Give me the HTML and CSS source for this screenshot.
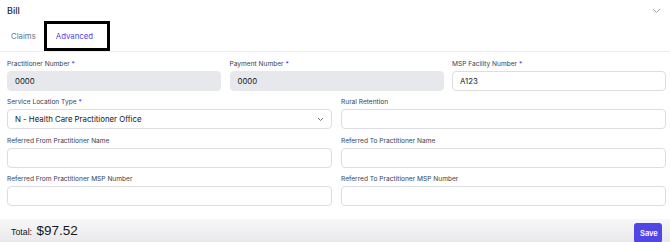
FILE: index.html
```html
<!DOCTYPE html>
<html lang="en">
<head>
  <meta charset="UTF-8">
  <meta name="viewport" content="width=device-width, initial-scale=1.0">
  <title>Bill</title>
  <link rel="stylesheet" href="styles.css">
</head>
<body>

  <div class="panel-header">
    <span class="panel-title">Bill</span>
    <svg class="header-chevron" width="9" height="6" viewBox="0 0 9 6"><path d="M1 1l3.5 3.5L8 1" fill="none" stroke="#9ca3af" stroke-width="1"/></svg>
  </div>

  <div class="tabs">
    <button class="tab">Claims</button>
    <button class="tab tab-active">Advanced</button>
  </div>

  <div class="form">
    <div class="row row-3">
      <div class="field">
        <label>Practitioner Number <span class="req">*</span></label>
        <div class="input input-disabled">0000</div>
      </div>
      <div class="field">
        <label>Payment Number <span class="req">*</span></label>
        <div class="input input-disabled">0000</div>
      </div>
      <div class="field">
        <label>MSP Facility Number <span class="req">*</span></label>
        <div class="input">A123</div>
      </div>
    </div>

    <div class="row row-2">
      <div class="field">
        <label>Service Location Type <span class="req">*</span></label>
        <div class="input select">
          <span>N - Health Care Practitioner Office</span>
          <svg width="7" height="5" viewBox="0 0 7 5"><path d="M1 1l2.5 2.5L6 1" fill="none" stroke="#6b7280" stroke-width="1"/></svg>
        </div>
      </div>
      <div class="field">
        <label>Rural Retention</label>
        <div class="input"></div>
      </div>
    </div>

    <div class="row row-2">
      <div class="field">
        <label>Referred From Practitioner Name</label>
        <div class="input"></div>
      </div>
      <div class="field">
        <label>Referred To Practitioner Name</label>
        <div class="input"></div>
      </div>
    </div>

    <div class="row row-2">
      <div class="field">
        <label>Referred From Practitioner MSP Number</label>
        <div class="input"></div>
      </div>
      <div class="field">
        <label>Referred To Practitioner MSP Number</label>
        <div class="input"></div>
      </div>
    </div>
  </div>

  <div class="footer">
    <div class="total"><span class="total-label">Total:</span> <span class="total-amount">$97.52</span></div>
    <button class="save-btn">Save</button>
  </div>

</body>
</html>
```

FILE: styles.css
```css
body {
  margin: 0;
  width: 670px;
  height: 242px;
  overflow: hidden;
  font-family: Inter, 'Liberation Sans', sans-serif;
  color: #111827;
  background: #ffffff;
}

.panel-header {
  height: 21px;
  display: flex;
  align-items: center;
  justify-content: space-between;
  padding: 0 9px 0 7px;
}

.panel-title {
  font-size: 9px;
  font-weight: 500;
  color: #1f2937;
}

.tabs {
  height: 30px;
  display: flex;
  align-items: stretch;
  border-bottom: 1px solid #ececef;
}

.tab {
  background: none;
  border: 3px solid transparent;
  font-family: inherit;
  font-size: 7.8px;
  color: #6b7280;
  padding: 0 5px 0 8px;
  cursor: pointer;
}

.tab-active {
  border-color: #000;
  color: #4f46e5;
  padding: 0 9px;
  width: 66px;
  text-align: left;
}

.form {
  padding: 7px 4px 0 7px;
  display: flex;
  flex-direction: column;
  gap: 6.4px;
}

.row {
  display: grid;
}

.row-3 {
  grid-template-columns: 1fr 1fr 1fr;
  gap: 8.5px;
}

.row-2 {
  grid-template-columns: 1fr 1fr;
  gap: 9px;
}

.field label {
  display: block;
  font-size: 6.6px;
  line-height: 10px;
  margin-bottom: 2px;
  color: #374151;
}

.req {
  color: #4f46e5;
}

.input {
  height: 20px;
  box-sizing: border-box;
  border: 1px solid #dcdde1;
  border-radius: 4px;
  background: #fff;
  padding: 0 7px;
  display: flex;
  align-items: center;
  font-size: 7.8px;
  color: #111827;
}

.input-disabled {
  background: #e7e8eb;
  border-color: #e7e8eb;
}

.select {
  justify-content: space-between;
  padding-right: 7px;
}

.footer {
  margin-top: 13px;
  height: 23px;
  display: flex;
  align-items: flex-end;
  justify-content: space-between;
  padding: 0 8px 0 11px;
  background: linear-gradient(to bottom, #f7f7f8, #e9e9eb);
}

.total {
  font-family: 'Liberation Sans', Arial, sans-serif;
  padding-bottom: 3px;
}

.total-label {
  font-size: 8.8px;
  color: #111827;
}

.total-amount {
  font-size: 13.5px;
  color: #111827;
}

.save-btn {
  background: #4f46e5;
  color: #fff;
  border: none;
  border-radius: 3px;
  font-family: inherit;
  font-weight: 600;
  font-size: 7.5px;
  width: 28px;
  height: 20px;
  margin-bottom: -1px;
  cursor: pointer;
}
```
